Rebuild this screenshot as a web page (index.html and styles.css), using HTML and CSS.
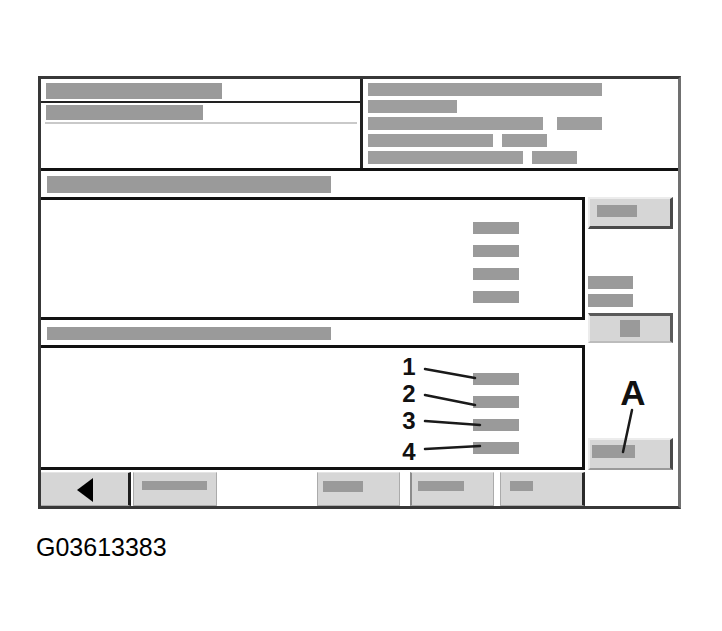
FILE: index.html
```html
<!DOCTYPE html>
<html lang="en">
<head>
<meta charset="utf-8">
<title>G03613383</title>
<link rel="stylesheet" href="styles.css">
</head>
<body>
<div class="page">
  <div class="frame">
    <div class="header">
      <div class="hleft">
        <div class="hrow1"><span class="bar w176 h16"></span></div>
        <div class="hrow2"><span class="bar w157 h15"></span></div>
      </div>
      <div class="hright">
        <div class="hline"><span class="bar w234"></span></div>
        <div class="hline"><span class="bar w89"></span></div>
        <div class="hline"><span class="bar w175"></span><span class="bar w45 ml14"></span></div>
        <div class="hline"><span class="bar w125"></span><span class="bar w45 ml9"></span></div>
        <div class="hline"><span class="bar w155"></span><span class="bar w45 ml9"></span></div>
      </div>
    </div>
    <div class="main">
      <div class="mleft">
        <div class="title title1"><span class="bar"></span></div>
        <div class="panel panel1">
          <span class="bar"></span><span class="bar"></span><span class="bar"></span><span class="bar"></span>
        </div>
        <div class="title title2"><span class="bar"></span></div>
        <div class="panel panel2">
          <span class="bar"></span><span class="bar"></span><span class="bar"></span><span class="bar"></span>
        </div>
        <div class="toolbar">
          <div class="tb tb-back">
            <svg class="arrow" width="16" height="24" viewBox="0 0 16 24"><polygon points="0,12 16,0 16,24" fill="#000"/></svg>
          </div>
          <div class="tb tb2"><span class="bar"></span></div>
          <div class="tb tb3"><span class="bar"></span></div>
          <div class="tb tb4"><span class="bar"></span></div>
          <div class="tb tb5"><span class="bar"></span></div>
        </div>
      </div>
      <div class="mright">
        <div class="rbtn rbtn1"><span class="bar"></span></div>
        <div class="rbars"><span class="bar"></span><span class="bar"></span></div>
        <div class="rbtn rbtn2"><span class="bar"></span></div>
        <div class="rbtn rbtnA"><span class="bar"></span></div>
      </div>
    </div>
    <svg class="callouts" width="637" height="427" viewBox="0 0 637 427">
      <g stroke="#1a1a1a" stroke-width="2.5" stroke-linecap="round">
        <line x1="384" y1="290" x2="434" y2="299"/>
        <line x1="384" y1="316" x2="434" y2="326"/>
        <line x1="384" y1="342" x2="439" y2="346"/>
        <line x1="384" y1="370" x2="439" y2="367"/>
        <line x1="591" y1="331" x2="582" y2="373"/>
      </g>
    </svg>
    <span class="num n1">1</span>
    <span class="num n2">2</span>
    <span class="num n3">3</span>
    <span class="num n4">4</span>
    <span class="alabel">A</span>
  </div>
  <div class="caption">G03613383</div>
</div>
</body>
</html>
```
FILE: styles.css
```css
body {
  margin: 0;
  background: #fff;
  font-family: "Liberation Sans", Arial, sans-serif;
}
.page {
  padding: 76px 0 0 38px;
}
.frame {
  position: relative;
  width: 643px;
  height: 433px;
  box-sizing: border-box;
  border: 3px solid #383838;
  border-right-color: #707070;
}
.bar {
  display: block;
  background: #9a9a9a;
}

/* header */
.header {
  display: flex;
  height: 92px;
  box-sizing: border-box;
  border-bottom: 3px solid #111;
}
.hleft {
  width: 322px;
  box-sizing: border-box;
  border-right: 3px solid #222;
}
.hrow1 {
  height: 24px;
  box-sizing: border-box;
  border-bottom: 2px solid #222;
  padding: 4px 0 0 5px;
}
.hrow2 {
  height: 21px;
  box-sizing: border-box;
  border-bottom: 2px solid #c9c9c9;
  margin: 0 3px 0 4px;
  padding: 2px 0 0 1px;
}
.w176 { width: 176px; }
.w157 { width: 157px; }
.h16 { height: 16px; }
.h15 { height: 15px; }
.hright {
  flex: 1;
  padding: 4px 0 0 5px;
  display: flex;
  flex-direction: column;
  gap: 4px;
}
.hline {
  display: flex;
  height: 13px;
}
.hline .bar { height: 13px; background: #9e9e9e; }
.w234 { width: 234px; }
.w89 { width: 89px; }
.w175 { width: 175px; }
.w125 { width: 125px; }
.w155 { width: 155px; }
.w45 { width: 45px; }
.ml14 { margin-left: 14px; }
.ml9 { margin-left: 9px; }

/* main */
.main {
  display: flex;
  height: 335px;
}
.mleft {
  width: 544px;
  display: flex;
  flex-direction: column;
}
.title {
  box-sizing: border-box;
}
.title .bar { width: 284px; }
.title1 {
  height: 26px;
  padding: 5px 0 0 6px;
}
.title1 .bar { height: 17px; }
.title2 {
  height: 25px;
  padding: 7px 0 0 6px;
}
.title2 .bar { height: 13px; }
.panel {
  box-sizing: border-box;
  border: 3px solid #111;
  border-left: 0;
  padding-left: 432px;
  display: flex;
  flex-direction: column;
  gap: 11px;
}
.panel .bar { width: 46px; height: 12px; }
.panel1 { height: 123px; padding-top: 22px; }
.panel2 { height: 125px; padding-top: 25px; }

/* toolbar */
.toolbar {
  height: 36px;
  box-sizing: border-box;
  padding-top: 2px;
  display: flex;
}
.tb {
  height: 34px;
  box-sizing: border-box;
  background: #d6d6d6;
  border: 1px solid #ababab;
  border-top-color: #e4e4e4;
  padding-top: 8px;
}
.tb-back {
  width: 90px;
  border-left: 0;
  border-right: 3px solid #1e1e1e;
  display: flex;
  justify-content: center;
  align-items: center;
  padding: 0;
}
.arrow { display: block; margin-top: 1px; }
.tb2 { width: 84px; margin-left: 2px; padding-left: 8px; }
.tb2 .bar { width: 65px; height: 9px; }
.tb3 { width: 83px; margin-left: 100px; padding-left: 5px; }
.tb3 .bar { width: 40px; height: 11px; }
.tb4 { width: 84px; margin-left: 10px; padding-left: 6px; border-left: 2px solid #8c8c8c; }
.tb4 .bar { width: 46px; height: 10px; }
.tb5 { width: 85px; margin-left: 6px; padding-left: 9px; border-right: 3px solid #2a2a2a; }
.tb5 .bar { width: 23px; height: 10px; }

/* right column */
.mright {
  flex: 1;
  padding-left: 3px;
  display: flex;
  flex-direction: column;
  align-items: flex-start;
}
.rbtn {
  width: 85px;
  box-sizing: border-box;
  background: #d6d6d6;
}
.rbtn1 {
  height: 32px;
  margin-top: 26px;
  border-top: 2px solid #ececec;
  border-left: 2px solid #ececec;
  border-right: 3px solid #4a4a4a;
  border-bottom: 3px solid #4a4a4a;
  padding: 6px 0 0 7px;
}
.rbtn1 .bar { width: 40px; height: 12px; }
.rbars {
  margin-top: 47px;
  display: flex;
  flex-direction: column;
  gap: 5px;
}
.rbars .bar { width: 45px; height: 13px; }
.rbtn2 {
  height: 30px;
  margin-top: 6px;
  border-top: 3px solid #5a5a5a;
  border-right: 3px solid #5a5a5a;
  border-left: 2px solid #ececec;
  border-bottom: 2px solid #bcbcbc;
  padding: 4px 0 0 30px;
}
.rbtn2 .bar { width: 20px; height: 17px; }
.rbtnA {
  height: 32px;
  margin-top: 95px;
  border-top: 2px solid #ececec;
  border-left: 2px solid #ececec;
  border-right: 3px solid #4a4a4a;
  border-bottom: 2px solid #9a9a9a;
  padding: 5px 0 0 2px;
}
.rbtnA .bar { width: 43px; height: 13px; }

/* callouts */
.callouts {
  position: absolute;
  left: 0;
  top: 0;
  pointer-events: none;
}
.num {
  position: absolute;
  left: 358px;
  width: 20px;
  height: 20px;
  text-align: center;
  font: 700 24px/20px "Liberation Sans", Arial, sans-serif;
  color: #111;
}
.n1 { top: 278px; }
.n2 { top: 305px; }
.n3 { top: 332px; }
.n4 { top: 363px; }
.alabel {
  position: absolute;
  left: 572px;
  top: 296px;
  width: 40px;
  text-align: center;
  font: 700 35px/1 "Liberation Sans", Arial, sans-serif;
  color: #111;
}

.caption {
  margin: 26px 0 0 -2px;
  font: 400 25px/1 "Liberation Sans", Arial, sans-serif;
  color: #000;
}
```
